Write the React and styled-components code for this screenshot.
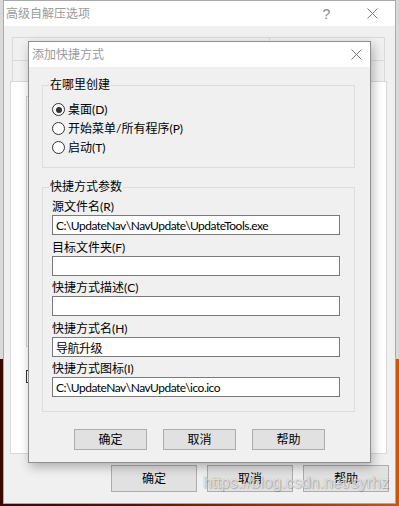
import React from 'react';
import styled, { createGlobalStyle } from 'styled-components';

const FONT = `Lato, "Noto Sans CJK SC", sans-serif`;

const GlobalStyle = createGlobalStyle`
  html, body {
    margin: 0;
    padding: 0;
  }
  body {
    width: 399px;
    height: 506px;
    overflow: hidden;
    font-family: ${FONT};
  }
`;

const Desktop = styled.div`
  position: relative;
  width: 399px;
  height: 506px;
  overflow: hidden;
  background:
    linear-gradient(#d9d9d9 0 359px, transparent 359px),
    linear-gradient(90deg, #3a0804 0%, #5a1305 35%, #9c3a0b 75%, #c9580f 100%);
`;

// windows sit on a free desktop, so they are placed by coordinates
const Window = styled.div`
  position: absolute;
  left: ${({ $left }) => $left}px;
  top: ${({ $top }) => $top}px;
  width: ${({ $width }) => $width}px;
  height: ${({ $height }) => $height}px;
  box-sizing: border-box;
  display: flex;
  flex-direction: column;
  background: #f0f0f0;
  border: 1px solid ${({ $border }) => $border};
  box-shadow: ${({ $shadow }) => $shadow || 'none'};
  font-family: ${FONT};
  font-size: 12px;
  color: #000;
`;

const TitleBar = styled.div`
  flex: none;
  height: 25px;
  display: flex;
  align-items: center;
  background: #fff;
  padding-left: ${({ $pad }) => $pad}px;
`;

const TitleText = styled.span`
  flex: 1;
  color: #9a9a9a;
  font-size: 12px;
  line-height: 16px;
`;

const CaptionButton = styled.div`
  width: ${({ $w }) => $w}px;
  height: 25px;
  display: flex;
  align-items: center;
  justify-content: center;
  color: #8a8a8a;
  font-family: "Liberation Sans", sans-serif;
  font-size: 14px;
`;

const CloseGlyph = () => (
  <svg width="11" height="11" viewBox="0 0 11 11">
    <path d="M0.5 0.5 L10.5 10.5 M10.5 0.5 L0.5 10.5" stroke="#7a7a7a" strokeWidth="1" fill="none" />
  </svg>
);

/* ---------- background dialog ---------- */

const BackBody = styled.div`
  flex: 1;
  display: flex;
  flex-direction: column;
  padding: 11px 8px 0 6px;
`;

const TabRow = styled.div`
  display: flex;
  margin: 0 2px;
  height: ${({ $h }) => $h}px;
`;

const TabCell = styled.div`
  box-sizing: border-box;
  width: ${({ $w }) => $w}px;
  border-top: 1px solid #d9d9d9;
  border-left: 1px solid #d9d9d9;
  ${({ $last }) => $last && 'border-right: 1px solid #d9d9d9;'}
`;

const Pane = styled.div`
  box-sizing: border-box;
  height: 373px;
  background: #fff;
  border: 1px solid #d9d9d9;
  padding: 14px 0 0 15px;
  display: flex;
  flex-direction: column;
  align-items: flex-start;
`;

const PaneBox = styled.div`
  width: 340px;
  height: 251px;
  box-sizing: border-box;
  border: 1px solid #d4d4d4;
`;

const CheckBox = styled.div`
  margin-top: 23px;
  width: 13px;
  height: 13px;
  box-sizing: border-box;
  border: 1px solid #333;
  background: #fff;
`;

const ButtonRow = styled.div`
  display: flex;
  gap: ${({ $gap }) => $gap}px;
  justify-content: ${({ $justify }) => $justify || 'flex-start'};
  margin: ${({ $margin }) => $margin};
`;

const Button = styled.div`
  box-sizing: border-box;
  width: ${({ $w }) => $w}px;
  height: ${({ $h }) => $h}px;
  display: flex;
  align-items: center;
  justify-content: center;
  background: #e1e1e1;
  border: 1px solid #adadad;
  font-size: 12px;
  line-height: 16px;
`;

/* ---------- shortcut dialog ---------- */

const FrontBody = styled.div`
  flex: 1;
  display: flex;
  flex-direction: column;
  padding: 10px 15px 0 13px;
`;

const Group = styled.fieldset`
  margin: ${({ $mt }) => $mt}px 0 0;
  padding: ${({ $pad }) => $pad};
  border: 1px solid #dcdcdc;
  min-width: 0;
  display: flex;
  flex-direction: column;
`;

const GroupTitle = styled.legend`
  margin-left: -3px;
  padding: 0 1px;
  font-size: 12px;
  line-height: 16px;
`;

const RadioRow = styled.label`
  display: flex;
  align-items: center;
  gap: 3px;
  height: 19px;
  line-height: 16px;
`;

const RadioCircle = styled.span`
  width: 13px;
  height: 13px;
  box-sizing: border-box;
  border: 1px solid #333;
  border-radius: 50%;
  background: #fff;
  display: flex;
  align-items: center;
  justify-content: center;

  &::after {
    content: '';
    width: 6px;
    height: 6px;
    border-radius: 50%;
    background: ${({ $checked }) => ($checked ? '#333' : 'transparent')};
  }
`;

const Field = styled.div`
  display: flex;
  flex-direction: column;
  margin-top: ${({ $mt }) => $mt}px;
`;

const FieldLabel = styled.span`
  line-height: 16px;
`;

const TextBox = styled.input`
  box-sizing: border-box;
  width: 288px;
  height: 20px;
  margin: 0;
  padding: 0 3px;
  border: 1px solid #7a7a7a;
  border-radius: 0;
  background: #fff;
  outline: none;
  font-family: ${FONT};
  font-size: 12px;
  line-height: 18px;
  letter-spacing: -0.5px;
  color: #000;
`;

const Watermark = styled.div`
  position: absolute;
  left: 203px;
  top: 474px;
  font-family: "Liberation Sans", Arial, sans-serif;
  font-size: 16px;
  line-height: 18px;
  color: rgba(255, 255, 255, 0.72);
  text-shadow: 0 0 1px rgba(0, 0, 0, 0.35), 1px 1px 1px rgba(0, 0, 0, 0.2);
  pointer-events: none;
`;

const places = [
  { text: '桌面(D)', checked: true },
  { text: '开始菜单/所有程序(P)' },
  { text: '启动(T)' },
];

const fields = [
  { label: '源文件名(R)', value: 'C:\\UpdateNav\\NavUpdate\\UpdateTools.exe', mt: 0 },
  { label: '目标文件夹(F)', value: '', mt: 5 },
  { label: '快捷方式描述(C)', value: '', mt: 4 },
  { label: '快捷方式名(H)', value: '导航升级', mt: 5 },
  { label: '快捷方式图标(I)', value: 'C:\\UpdateNav\\NavUpdate\\ico.ico', mt: 4 },
];

const App = () => (
  <Desktop>
    <GlobalStyle />

    <Window $left={3} $top={0} $width={393} $height={504} $border="#aaaaaa">
      <TitleBar $pad={2}>
        <TitleText>高级自解压选项</TitleText>
        <CaptionButton $w={45}>?</CaptionButton>
        <CaptionButton $w={46}>
          <CloseGlyph />
        </CaptionButton>
      </TitleBar>
      <BackBody>
        <TabRow $h={23}>
          <TabCell $w={257} />
          <TabCell $w={116} $last />
        </TabRow>
        <TabRow $h={21}>
          <TabCell $w={180} />
          <TabCell $w={193} $last />
        </TabRow>
        <Pane>
          <PaneBox />
          <CheckBox />
        </Pane>
        <ButtonRow $gap={10} $justify="flex-end" $margin="11px -2px 0 0">
          <Button $w={86} $h={27}>确定</Button>
          <Button $w={86} $h={27}>取消</Button>
          <Button $w={86} $h={27}>帮助</Button>
        </ButtonRow>
      </BackBody>
    </Window>

    <Window
      $left={28}
      $top={41}
      $width={343}
      $height={422}
      $border="#8f8f8f"
      $shadow="2px 4px 10px rgba(0, 0, 0, 0.28)"
    >
      <TitleBar $pad={3}>
        <TitleText>添加快捷方式</TitleText>
        <CaptionButton $w={28}>
          <CloseGlyph />
        </CaptionButton>
      </TitleBar>
      <FrontBody>
        <Group $mt={0} $pad="7px 9px 10px">
          <GroupTitle>在哪里创建</GroupTitle>
          {places.map((p) => (
            <RadioRow key={p.text}>
              <RadioCircle $checked={p.checked} />
              {p.text}
            </RadioRow>
          ))}
        </Group>

        <Group $mt={11} $pad="4px 9px 14px">
          <GroupTitle>快捷方式参数</GroupTitle>
          {fields.map((f) => (
            <Field key={f.label} $mt={f.mt}>
              <FieldLabel>{f.label}</FieldLabel>
              <TextBox readOnly value={f.value} />
            </Field>
          ))}
        </Group>

        <ButtonRow $gap={16} $margin="17px 0 0 32px">
          <Button $w={73} $h={21}>确定</Button>
          <Button $w={73} $h={21}>取消</Button>
          <Button $w={73} $h={21}>帮助</Button>
        </ButtonRow>
      </FrontBody>
    </Window>

    <Watermark>https://blog.csdn.net/syrhz</Watermark>
  </Desktop>
);

export default App;
